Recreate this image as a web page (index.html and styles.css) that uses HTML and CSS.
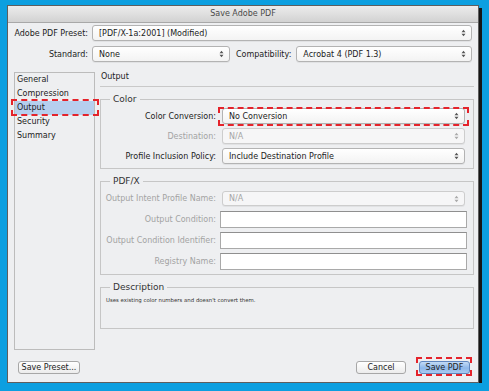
FILE: index.html
```html
<!DOCTYPE html>
<html lang="en">

<head>
    <meta charset="UTF-8" />
    <title>Save Adobe PDF</title>
    <link rel="stylesheet" href="styles.css">
</head>

<body>

    <div class="window">
        <div class="titlebar">Save Adobe PDF</div>

        <!-- Preset / standard rows -->
        <div class="top-rows">
            <label class="label">Adobe PDF Preset:</label>
            <div class="select wide">
                <span>[PDF/X-1a:2001] (Modified)</span>
                <svg width="5" height="8" viewBox="0 0 5 8"><path d="M0.5 3.2L2.5 0.8L4.5 3.2ZM0.5 4.8L2.5 7.2L4.5 4.8Z" fill="#555" /></svg>
            </div>

            <label class="label">Standard:</label>
            <div class="select">
                <span>None</span>
                <svg width="5" height="8" viewBox="0 0 5 8"><path d="M0.5 3.2L2.5 0.8L4.5 3.2ZM0.5 4.8L2.5 7.2L4.5 4.8Z" fill="#555" /></svg>
            </div>
            <label class="label compat">Compatibility:</label>
            <div class="select">
                <span>Acrobat 4 (PDF 1.3)</span>
                <svg width="5" height="8" viewBox="0 0 5 8"><path d="M0.5 3.2L2.5 0.8L4.5 3.2ZM0.5 4.8L2.5 7.2L4.5 4.8Z" fill="#555" /></svg>
            </div>
        </div>

        <div class="main">
            <!-- Category list -->
            <ul class="sidebar">
                <li>General</li>
                <li>Compression</li>
                <li class="active mark">Output</li>
                <li>Security</li>
                <li>Summary</li>
            </ul>

            <div class="panel">
                <div class="panel-title">Output</div>

                <fieldset class="group">
                    <legend>Color</legend>
                    <div class="rows">
                        <label class="label">Color Conversion:</label>
                        <div class="select mark">
                            <span>No Conversion</span>
                            <svg width="5" height="8" viewBox="0 0 5 8"><path d="M0.5 3.2L2.5 0.8L4.5 3.2ZM0.5 4.8L2.5 7.2L4.5 4.8Z" fill="#555" /></svg>
                        </div>

                        <label class="label disabled">Destination:</label>
                        <div class="select disabled">
                            <span>N/A</span>
                            <svg width="5" height="8" viewBox="0 0 5 8"><path d="M0.5 3.2L2.5 0.8L4.5 3.2ZM0.5 4.8L2.5 7.2L4.5 4.8Z" fill="#aaa" /></svg>
                        </div>

                        <label class="label">Profile Inclusion Policy:</label>
                        <div class="select">
                            <span>Include Destination Profile</span>
                            <svg width="5" height="8" viewBox="0 0 5 8"><path d="M0.5 3.2L2.5 0.8L4.5 3.2ZM0.5 4.8L2.5 7.2L4.5 4.8Z" fill="#555" /></svg>
                        </div>
                    </div>
                </fieldset>

                <fieldset class="group">
                    <legend>PDF/X</legend>
                    <div class="rows pdfx">
                        <label class="label disabled">Output Intent Profile Name:</label>
                        <div class="select disabled">
                            <span>N/A</span>
                            <svg width="5" height="8" viewBox="0 0 5 8"><path d="M0.5 3.2L2.5 0.8L4.5 3.2ZM0.5 4.8L2.5 7.2L4.5 4.8Z" fill="#aaa" /></svg>
                        </div>

                        <label class="label disabled">Output Condition:</label>
                        <div class="text-input"></div>

                        <label class="label disabled">Output Condition Identifier:</label>
                        <div class="text-input"></div>

                        <label class="label disabled">Registry Name:</label>
                        <div class="text-input"></div>
                    </div>
                </fieldset>

                <fieldset class="group">
                    <legend>Description</legend>
                    <div class="description">Uses existing color numbers and doesn't convert them.</div>
                </fieldset>
            </div>
        </div>

        <div class="footer">
            <button class="btn preset-btn">Save Preset...</button>
            <div class="footer-right">
                <button class="btn cancel-btn">Cancel</button>
                <button class="btn primary-btn mark">Save PDF</button>
            </div>
        </div>
    </div>

</body>

</html>
```

FILE: styles.css
```css
body {
    margin: 0;
    padding: 0;
    background: #0c9fe0;
    font-family: "DejaVu Sans", sans-serif;
    font-size: 8px;
    color: #222;
}

.window {
    box-sizing: border-box;
    margin: 5px 0 0 7px;
    width: 472px;
    height: 378px;
    background: #eeeff1;
    border: 1px solid #5e5e5e;
    box-shadow: 3px 3px 0 #151515;
    display: flex;
    flex-direction: column;
}

.titlebar {
    height: 16px;
    line-height: 16px;
    text-align: center;
    color: #4a4a4a;
    background: linear-gradient(#ececec, #d2d2d2);
    border-bottom: 1px solid #a8a8a8;
}

.top-rows {
    display: grid;
    grid-template-columns: 74px 138px auto 1fr;
    column-gap: 4px;
    row-gap: 5px;
    align-items: center;
    padding: 2px 6px 0 6px;
}

.top-rows .wide {
    grid-column: 2 / -1;
}

.label {
    text-align: right;
    white-space: nowrap;
}

.label.compat {
    padding: 0 1px 0 2px;
}

.label.disabled {
    color: #a3a3a3;
}

.select {
    position: relative;
    box-sizing: border-box;
    height: 16px;
    display: flex;
    align-items: center;
    justify-content: space-between;
    padding: 0 5px 0 6px;
    background: linear-gradient(#ffffff, #f3f3f3);
    border: 1px solid #b3b3b3;
    border-radius: 3px;
    box-shadow: 0 1px 0 rgba(0, 0, 0, 0.05);
    white-space: nowrap;
}

.select.disabled {
    color: #a5a5a5;
    background: #f6f6f7;
    border-color: #cdcdcd;
}

.text-input {
    box-sizing: border-box;
    height: 17px;
    margin: 0 -2px;
    background: #fff;
    border: 1px solid #a9a9a9;
    border-top-color: #8f8f8f;
}

.main {
    flex: 1;
    display: flex;
    gap: 5px;
    padding: 0 4px 0 6px;
    margin-top: 10px;
}

.sidebar {
    list-style: none;
    margin: 0;
    padding: 0;
    width: 81px;
    box-sizing: border-box;
    border: 1px solid #bcbcbc;
}

.sidebar li {
    position: relative;
    height: 14px;
    line-height: 14px;
    padding-left: 2px;
}

.sidebar li.active {
    background: #b6cfee;
}

.panel {
    flex: 1;
    display: flex;
    flex-direction: column;
}

.panel-title {
    line-height: 10px;
    padding: 0 0 4px 1px;
    border-bottom: 1px solid #c9c9c9;
}

.group {
    margin: 7px 0 0;
    padding: 3px 8px 4px 3px;
    border: 1px solid #c6c6c6;
    min-width: 0;
}

.group + .group {
    margin-top: 7px;
}

.group legend {
    font-size: 9px;
    line-height: 11px;
    padding: 0 3px;
    margin-left: 6px;
    color: #333;
}

.rows {
    display: grid;
    grid-template-columns: 112px 1fr;
    column-gap: 6px;
    row-gap: 4px;
    align-items: center;
}

.rows.pdfx .select {
    height: 15px;
    margin: 1px 0;
}

.description {
    height: 28px;
    padding: 0 0 0 2px;
    font-size: 5.4px;
    line-height: 8px;
    color: #333;
}

.footer {
    display: flex;
    justify-content: space-between;
    align-items: center;
    padding: 0 8px 8px 10px;
    margin-top: 11px;
}

.footer-right {
    display: flex;
    gap: 13px;
}

.btn {
    position: relative;
    box-sizing: border-box;
    height: 13px;
    padding: 0;
    font-family: "DejaVu Sans", sans-serif;
    font-size: 8px;
    color: #222;
    background: linear-gradient(#ffffff, #ececec);
    border: 1px solid #a7a7a7;
    border-radius: 3px;
}

.preset-btn {
    width: 62px;
}

.cancel-btn {
    width: 50px;
}

.primary-btn {
    width: 51px;
    background: linear-gradient(#c3dbf6, #8db7ea 55%, #a9cbf1);
    border-color: #5f86bf;
}

/* red dashed highlight boxes */
.mark::after {
    content: "";
    position: absolute;
    border: 2px dashed #e4232b;
    pointer-events: none;
}

.select.mark::after {
    inset: -2px -5px -3px -5px;
}

.sidebar li.mark::after {
    inset: -2px -5px -1px -4px;
}

.primary-btn.mark::after {
    inset: -5px -3px -3px -4px;
}
```
